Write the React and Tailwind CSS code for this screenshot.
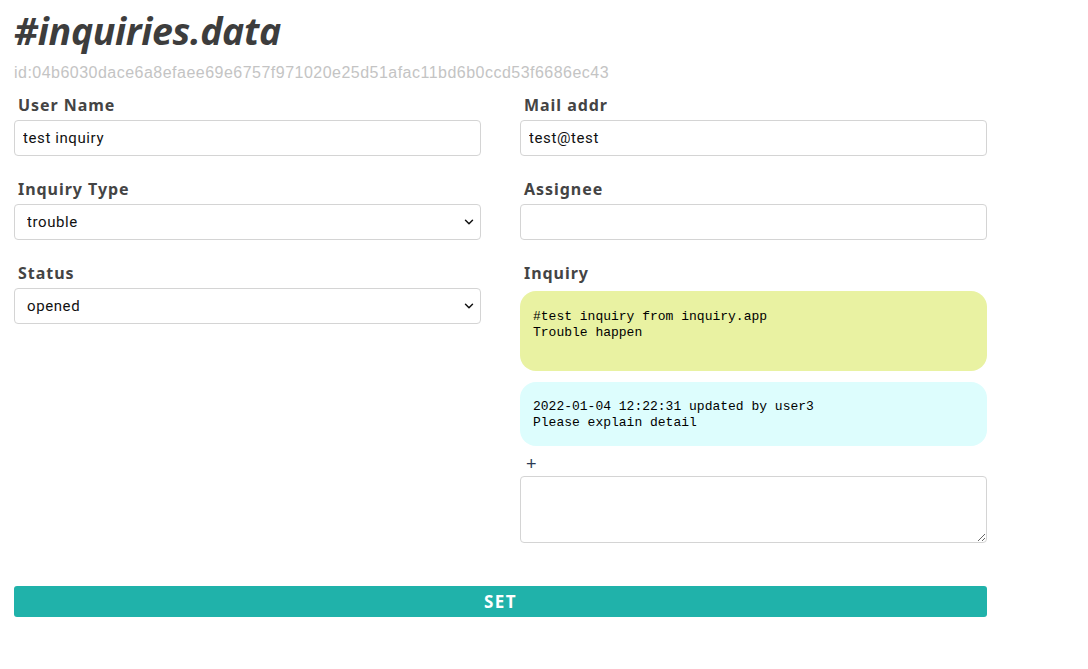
import React from "react";
import { ChevronDown } from "lucide-react";

const labelCls =
  "block pl-[4px] text-[16px] leading-[20px] font-bold tracking-[0.06em] text-[#444] mb-[5px] font-['Noto_Sans',sans-serif]";
const boxCls =
  "w-full h-[36px] border border-[#d4d4d4] rounded-[4px] bg-white text-[15px] tracking-[0.04em] text-[#111] font-['Roboto',sans-serif] outline-none";

function Field({ label, children }) {
  return (
    <div className="mb-[23px]">
      <label className={labelCls}>{label}</label>
      {children}
    </div>
  );
}

function Select({ value, options }) {
  return (
    <div className="relative">
      <select
        defaultValue={value}
        className={`${boxCls} appearance-none pl-[12px] pr-[30px]`}
      >
        {options.map((o) => (
          <option key={o}>{o}</option>
        ))}
      </select>
      <ChevronDown
        className="absolute right-[5px] top-[11px] w-[14px] h-[14px] text-[#111] pointer-events-none"
        strokeWidth={2.5}
      />
    </div>
  );
}

export default function App() {
  return (
    <div className="w-[1001px] pl-[14px] pt-[7px] bg-white font-['Noto_Sans',sans-serif]">
      <h1 className="text-[37.5px] leading-[48px] font-bold italic text-[#3d3d3d] tracking-[-0.01em] font-['Open_Sans',sans-serif]">
        #inquiries.data
      </h1>
      <div className="mt-[8px] text-[16px] leading-[20px] tracking-[0.03em] text-[#c4c4c4] font-['Liberation_Sans',sans-serif]">
        id:04b6030dace6a8efaee69e6757f971020e25d51afac11bd6b0ccd53f6686ec43
      </div>

      <div className="mt-[12px] grid grid-cols-[467px_467px] gap-x-[39px]">
        {/* 左カラム */}
        <div>
          <Field label="User Name">
            <input className={`${boxCls} px-[8px]`} defaultValue="test inquiry" />
          </Field>
          <Field label="Inquiry Type">
            <Select value="trouble" options={["trouble", "question", "request"]} />
          </Field>
          <Field label="Status">
            <Select value="opened" options={["opened", "in progress", "closed"]} />
          </Field>
        </div>

        {/* 右カラム */}
        <div>
          <Field label="Mail addr">
            <input className={`${boxCls} px-[8px]`} defaultValue="test@test" />
          </Field>
          <Field label="Assignee">
            <input className={`${boxCls} px-[8px]`} defaultValue="" />
          </Field>
          <div>
            <label className={labelCls}>Inquiry</label>
            <div className="mt-[8px] h-[80px] rounded-[16px] bg-[#e9f2a2] px-[13px] pt-[18px] text-[13px] leading-[16px] text-black font-['Liberation_Mono',monospace] whitespace-pre">
              {"#test inquiry from inquiry.app\nTrouble happen"}
            </div>
            <div className="mt-[11px] h-[64px] rounded-[16px] bg-[#ddfdfd] px-[13px] pt-[17px] text-[13px] leading-[16px] text-black font-['Liberation_Mono',monospace] whitespace-pre">
              {"2022-01-04 12:22:31 updated by user3\nPlease explain detail"}
            </div>
            <div className="mt-[8px] pl-[6px] text-[18px] leading-[20px] text-[#2b3a55] font-['Liberation_Sans',sans-serif]">
              +
            </div>
            <textarea className="mt-[2px] block w-full h-[67px] border border-[#d4d4d4] rounded-[4px] outline-none" />
          </div>
        </div>
      </div>

      <button className="mt-[43px] w-[973px] h-[31px] rounded-[3px] bg-[#20b2aa] text-white text-[17px] font-bold tracking-[0.08em] font-['Noto_Sans',sans-serif]">
        SET
      </button>
    </div>
  );
}
